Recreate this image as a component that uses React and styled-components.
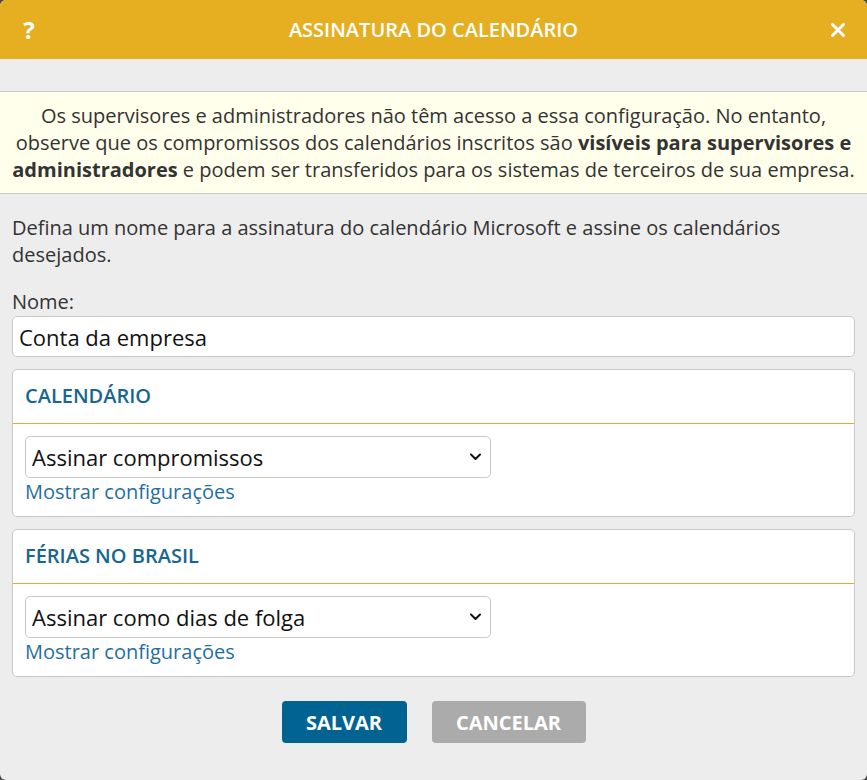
import React from "react";
import styled, { createGlobalStyle } from "styled-components";

const GlobalStyle = createGlobalStyle`
  html, body {
    margin: 0;
    padding: 0;
    background: #4a4a4a;
  }
  body {
    font-family: "Open Sans", "Noto Sans", sans-serif;
    color: #333;
  }
  * {
    box-sizing: border-box;
  }
`;

const Dialog = styled.div`
  width: 867px;
  height: 780px;
  background: #ededed;
  border-radius: 6px;
  overflow: hidden;
  display: flex;
  flex-direction: column;
`;

const Header = styled.div`
  height: 59px;
  background: #e6af21;
  color: #fff;
  display: flex;
  align-items: center;
  justify-content: space-between;
  padding: 0 18px 0 18px;
`;

const HeaderIcon = styled.button`
  background: none;
  border: none;
  padding: 0;
  color: #fff;
  font-family: "Open Sans", sans-serif;
  font-weight: 700;
  font-size: 24px;
  line-height: 1;
  width: 22px;
  display: flex;
  align-items: center;
  justify-content: center;
  cursor: pointer;
`;

const Title = styled.h1`
  margin: 0;
  font-size: 20px;
  font-weight: 600;
`;

const Notice = styled.div`
  margin-top: 32px;
  background: #ffffeb;
  border-top: 1px solid #c8c8c8;
  border-bottom: 1px solid #c8c8c8;
  padding: 10px 6px;
  text-align: center;
  font-size: 20px;
  line-height: 27px;
  color: #333;

  strong {
    font-weight: 700;
  }
`;

const Body = styled.div`
  padding: 20px 12px 0;
  display: flex;
  flex-direction: column;
`;

const Intro = styled.p`
  margin: 0 0 20px;
  font-size: 20px;
  line-height: 27px;
  color: #333;
`;

const Label = styled.label`
  font-size: 20px;
  line-height: 27px;
  color: #333;
`;

const TextInput = styled.input`
  height: 41px;
  margin-top: 1px;
  width: 100%;
  border: 1px solid #c8c8c8;
  border-radius: 5px;
  background: #fff;
  padding: 0 6px;
  font-family: "Open Sans", sans-serif;
  font-size: 22px;
  color: #111;
  outline: none;
`;

const Card = styled.section`
  margin-top: ${(p) => p.$gap}px;
  background: #fff;
  border: 1px solid #c8c8c8;
  border-radius: 5px;
`;

const CardTitle = styled.h2`
  margin: 0;
  height: 54px;
  display: flex;
  align-items: center;
  padding: 0 12px 2px;
  border-bottom: 1px solid #e0ae30;
  font-size: 20px;
  font-weight: 600;
  color: #17668f;
`;

const CardBody = styled.div`
  padding: 12px 12px 11px;
  display: flex;
  flex-direction: column;
  align-items: flex-start;
`;

const SelectWrap = styled.div`
  position: relative;
  width: 466px;
`;

const Select = styled.select`
  appearance: none;
  width: 100%;
  height: 42px;
  border: 1px solid #c8c8c8;
  border-radius: 5px;
  background: #fff;
  padding: 0 36px 0 6px;
  font-family: "Open Sans", sans-serif;
  font-size: 22px;
  color: #111;
  outline: none;
`;

const Chevron = styled.svg`
  position: absolute;
  right: 9px;
  top: 50%;
  transform: translateY(-50%);
  pointer-events: none;
`;

const Link = styled.a`
  font-size: 20px;
  line-height: 27px;
  color: #1f6f9e;
  text-decoration: none;
  cursor: pointer;
`;

const Actions = styled.div`
  margin-top: 24px;
  display: flex;
  justify-content: center;
  gap: 25px;
`;

const Button = styled.button`
  height: 42px;
  width: ${(p) => p.$w}px;
  border: none;
  border-radius: 4px;
  background: ${(p) => (p.$primary ? "#006391" : "#ababab")};
  color: #fff;
  font-family: "Open Sans", sans-serif;
  font-weight: 700;
  font-size: 20px;
  padding: 0;
  cursor: pointer;
`;

const CalendarCard = ({ title, value, gap }) => (
  <Card $gap={gap}>
    <CardTitle>{title}</CardTitle>
    <CardBody>
      <SelectWrap>
        <Select defaultValue={value}>
          <option>{value}</option>
        </Select>
        <Chevron width="13" height="9" viewBox="0 0 13 9">
          <path d="M2 2 L6.5 6.5 L11 2" fill="none" stroke="#111" strokeWidth="2" strokeLinecap="round" strokeLinejoin="round" />
        </Chevron>
      </SelectWrap>
      <Link>Mostrar configurações</Link>
    </CardBody>
  </Card>
);

export default function App() {
  return (
    <>
      <GlobalStyle />
      <Dialog>
        <Header>
          <HeaderIcon>?</HeaderIcon>
          <Title>ASSINATURA DO CALENDÁRIO</Title>
          <HeaderIcon>
            <svg width="16" height="16" viewBox="0 0 16 16">
              <path d="M2.5 2.5 L13.5 13.5 M13.5 2.5 L2.5 13.5" stroke="#fff" strokeWidth="3" strokeLinecap="round" />
            </svg>
          </HeaderIcon>
        </Header>
        <Notice>
          Os supervisores e administradores não têm acesso a essa configuração. No entanto,
          observe que os compromissos dos calendários inscritos são{" "}
          <strong>visíveis para supervisores e administradores</strong> e podem ser transferidos
          para os sistemas de terceiros de sua empresa.
        </Notice>
        <Body>
          <Intro>
            Defina um nome para a assinatura do calendário Microsoft e assine os calendários
            desejados.
          </Intro>
          <Label htmlFor="nome">Nome:</Label>
          <TextInput id="nome" defaultValue="Conta da empresa" />
          <CalendarCard title="CALENDÁRIO" value="Assinar compromissos" gap={12} />
          <CalendarCard title="FÉRIAS NO BRASIL" value="Assinar como dias de folga" gap={12} />
          <Actions>
            <Button $primary $w={125}>SALVAR</Button>
            <Button $w={154}>CANCELAR</Button>
          </Actions>
        </Body>
      </Dialog>
    </>
  );
}
